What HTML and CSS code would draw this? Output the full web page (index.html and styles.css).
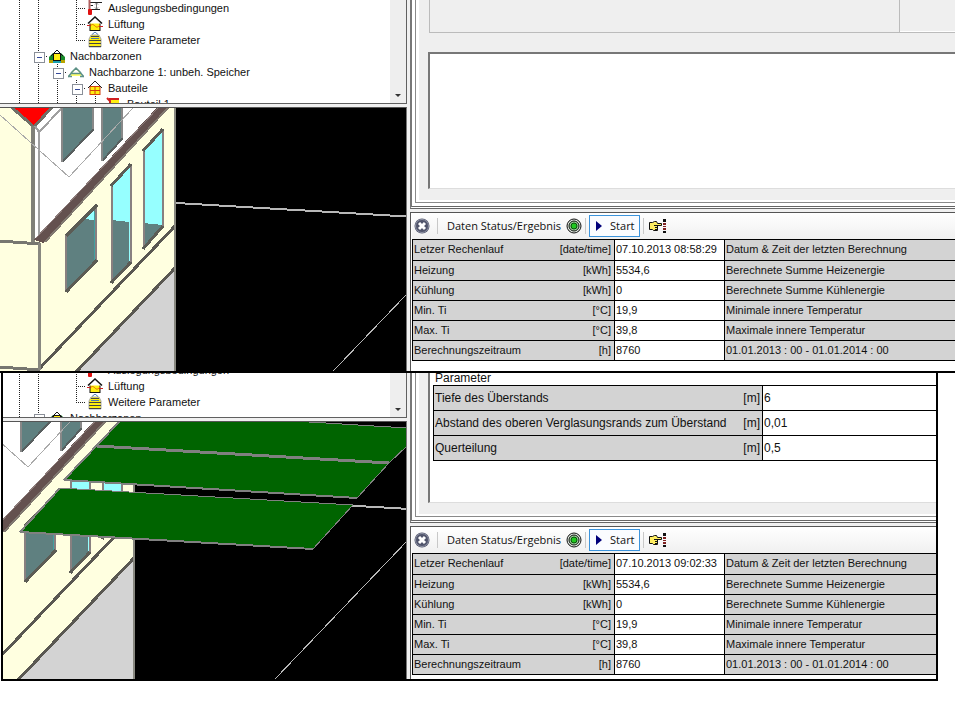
FILE: index.html
```
<!DOCTYPE html>
<html lang="de">
<head>
<meta charset="utf-8">
<title>Gebäudesimulation</title>
<link rel="stylesheet" href="styles.css">
</head>
<body>
<svg class="defs" aria-hidden="true">
  <defs>
    <symbol id="i-thermo" viewBox="0 0 16 16">
      <path d="M3 2.500H15M3 9.500H13M3.500 5.500H6" stroke="#222" fill="none"/>
      <path d="M9.500 3V9M8 4.500L9.500 3L11 4.500M8 7.500L9.500 9L11 7.500" stroke="#777" fill="none"/>
      <path d="M2.500 0V11" stroke="#b06060" stroke-width="2"/>
      <rect x="1" y="9" width="4" height="6" rx="1" fill="#e01010"/>
    </symbol>
    <symbol id="i-vent" viewBox="0 0 16 16">
      <rect x="3" y="6.500" width="10" height="8" fill="#ffee10" stroke="#111"/>
      <path d="M1 7.500L8 1L15 7.500" fill="#fff" stroke="#111" stroke-width="1.500"/>
      <path d="M3 10C5 8 6 8 8 10S11 11 13 9" fill="none" stroke="#e07000"/>
      <path d="M0 9.500H4M12 10.500H16" stroke="#d02020"/>
    </symbol>
    <symbol id="i-para" viewBox="0 0 16 16">
      <path d="M2 15V7L4 3H12L14 7V15Z" fill="#ffee10" stroke="#aaa"/>
      <path d="M4 4.500H12M2 8.500H14M2 11.500H14M2 14.500H14" stroke="#444"/>
      <path d="M5 2.500L8 0L11 2.500M4 6.500H12" fill="none" stroke="#4d7bb0"/>
    </symbol>
    <symbol id="i-zones" viewBox="0 0 16 16">
      <path d="M0 14V9L4 5H12L16 9V14Z" fill="#178a2a"/>
      <path d="M0 12H4V15H0ZM12 12H16V15H12Z" fill="#b8a400"/>
      <rect x="4.500" y="5.500" width="7" height="7" fill="#ffee10" stroke="#111"/>
      <path d="M4 13H12V15H4Z" fill="#1aa0b0"/>
      <path d="M5 5L8 2L11 5Z" fill="#fff"/>
      <path d="M2 8L8 2L14 8" fill="none" stroke="#111"/>
    </symbol>
    <symbol id="i-zone" viewBox="0 0 16 16">
      <path d="M3 12V9L8 4L13 9V12Z" fill="#ffff70"/>
      <path d="M4 9.500H12L8 5Z" fill="#fff"/>
      <path d="M0 13L3 9.500H13L16 13M3 9L8 4L13 9M0 12.500H4M12 12.500H16" fill="none" stroke="#5d9186" stroke-width="1.500"/>
    </symbol>
    <symbol id="i-parts" viewBox="0 0 16 16">
      <rect x="3" y="6.500" width="10" height="8" fill="#ffee10" stroke="#d04010"/>
      <path d="M8 7V14M3 10.500H13" stroke="#d04010"/>
      <path d="M1 8L8 1L15 8" fill="none" stroke="#222"/>
    </symbol>
    <symbol id="i-part" viewBox="0 0 16 16">
      <rect x="4" y="3" width="9" height="12" fill="#ffee10"/>
      <path d="M1 2L4 5V15M3 3H13" fill="none" stroke="#d02020" stroke-width="2"/>
    </symbol>
    <symbol id="i-close" viewBox="0 0 16 16">
      <circle cx="8" cy="8" r="7.500" fill="#50546b"/>
      <circle cx="8" cy="8" r="6.500" fill="none" stroke="#9094a6"/>
      <path d="M5 5L11 11M11 5L5 11" stroke="#fff" stroke-width="3"/>
    </symbol>
    <symbol id="i-target" viewBox="0 0 16 16">
      <circle cx="8" cy="8" r="7" fill="#dfe8df" stroke="#111"/>
      <circle cx="8" cy="8" r="5" fill="#9ccf9c" stroke="#111"/>
      <circle cx="8" cy="8" r="3" fill="#20c820" stroke="#085008"/>
    </symbol>
    <symbol id="i-hand" viewBox="0 0 18 16">
      <path d="M0.500 4.500H3.500L5.500 3.500H7.500L8.500 5.500H12.500V7.500H8.500V12.500H4.500L3.500 11.500H0.500Z" fill="#ffee60" stroke="#111"/>
      <path d="M5 7.500H9M6 9.500H9M6 11.500H8" stroke="#111"/>
      <path d="M14 1H17V4H14ZM14 13H17V15H14Z" fill="#111"/>
      <path d="M14 5H17V7H14ZM14 8H17V9H14ZM14 10H17V12H14Z" fill="#802020"/>
    </symbol>

    <g id="house">
      <path d="M0 100H175V400H0Z" fill="#ffffe0"/>
      <path d="M34 126L50 108H158L36 238Z" fill="#fff"/>
      <path d="M12 106H52L34 125Z" fill="#f00"/>
      <path d="M8 104L34 127M34 127L53 106" stroke="#707068" stroke-width="3"/>
      <path d="M35 126H39V240H35Z" fill="#fff"/>
      <path d="M33 126V242" stroke="#808078" stroke-width="4"/>
      <path d="M39 131V240M35 126L39 132L62 108" fill="none" stroke="#a0a0a0" stroke-width="2"/>
      <path d="M164 100H175L44 243L34 240Z" fill="#64514f"/>
      <path d="M175 100L45 242" stroke="#807870" stroke-width="2"/>
      <path d="M158 108L36 238" stroke="#8b7a78"/>

      <path d="M62 100H93V130L62 162Z" fill="#5f8080"/>
      <path d="M93 108V130L62 162" fill="none" stroke="#585f5f" stroke-width="2"/>
      <path d="M62 108V162M93 108V129" stroke="#888" stroke-width="2"/>
      <path d="M102 100H122V139L102 161Z" fill="#5f8080"/>
      <path d="M122 108V139L102 161" fill="none" stroke="#585f5f" stroke-width="2"/>
      <path d="M102 108V161M122 108V138" stroke="#888" stroke-width="2"/>
      <path d="M0 115L69 177L133 108" fill="none" stroke="#aaa"/>

      <path d="M143 150L163 129V226L143 248Z" fill="#96ffff"/>
      <path d="M143 223L163 225V226L143 248Z" fill="#5f8080"/>
      <path d="M111 185L131 164V262L111 283Z" fill="#96ffff"/>
      <path d="M111 220L129 222V263L111 283Z" fill="#5f8080"/>
      <path d="M66 234L97 205V259L66 291Z" fill="#5f8080"/>
      <path d="M83 219L94 208V220Z" fill="#96ffff"/>
      <path d="M94 212V260M130 222V262" stroke="#40a0a0"/>
      <g fill="none" stroke="#888080" stroke-width="2">
        <path d="M144 249V150M163 129V226M112 283V185M131 164V262M66 292V235M96 205V260"/>
      </g>
      <g stroke="#5c5c55" stroke-width="3">
        <path d="M143 151L163 129M143 249L163 226M111 186L131 164M111 283L131 262M66 236L97 205M66 292L97 260"/>
      </g>

      <path d="M175 267L58 391H175Z" fill="#d3d3d3"/>
      <path d="M175 226L40 368M175 268L58 391" stroke="#5a5852" stroke-width="3"/>
      <path d="M0 241L40 244M0 367L40 370" stroke="#777770" stroke-width="3"/>
      <path d="M39 243V370" stroke="#888880" stroke-width="3"/>
      <path d="M175 108V400" stroke="#888880" stroke-width="2"/>
      <path d="M176 203L450 219" stroke="#b8b8b8" stroke-width="2"/>
      <path d="M450 249L316 389" stroke="#b8b8b8" fill="none"/>
    </g>
  </defs>
</svg>

<section class="window window-top">
  <div class="side">
    <div class="tree-pane">
      <ul class="tree">
        <li><i class="v"></i><i class="v"></i><i></i><i class="v h"></i><svg><use href="#i-thermo"/></svg><span>Auslegungsbedingungen</span></li>
        <li><i class="v"></i><i class="v"></i><i></i><i class="v h"></i><svg><use href="#i-vent"/></svg><span>Lüftung</span></li>
        <li><i class="v"></i><i class="v"></i><i></i><i class="end h"></i><svg><use href="#i-para"/></svg><span>Weitere Parameter</span></li>
        <li><i class="v"></i><i class="v h box"></i><svg><use href="#i-zones"/></svg><span>Nachbarzonen</span></li>
        <li><i class="v"></i><i class="v"></i><i class="v h box"></i><svg><use href="#i-zone"/></svg><span>Nachbarzone 1: unbeh. Speicher</span></li>
        <li><i class="v"></i><i class="v"></i><i class="v"></i><i class="v h box"></i><svg><use href="#i-parts"/></svg><span>Bauteile</span></li>
        <li><i class="v"></i><i class="v"></i><i class="v"></i><i class="v"></i><i class="v h"></i><svg><use href="#i-part"/></svg><span>Bauteil 1</span></li>
      </ul>
      <div class="scroll"><b></b></div>
    </div>
    <svg class="scene" viewBox="0 108 406 263" preserveAspectRatio="xMinYMin slice" shape-rendering="crispEdges">
      <use href="#house"/>
    </svg>
  </div>
  <div class="main">
    <div class="pane"><div class="pane-mid"><div class="pane-inner">
      <div class="group"><div class="group-left"></div><div class="group-right"></div></div>
      <div class="sheet"></div>
    </div></div></div>
    <div class="status">
      <div class="toolbar">
        <button class="close" aria-label="Schließen"><svg><use href="#i-close"/></svg></button>
        <span class="sep"></span>
        <span class="title">Daten Status/Ergebnis</span>
        <svg><use href="#i-target"/></svg>
        <span class="sep"></span>
        <button class="start"><span class="play"></span>Start</button>
        <span class="sep"></span>
        <svg class="hand"><use href="#i-hand"/></svg>
      </div>
      <table class="results">
        <tr><th>Letzer Rechenlauf</th><td class="unit">[date/time]</td><td class="val">07.10.2013 08:58:29</td><td>Datum &amp; Zeit der letzten Berechnung</td></tr>
        <tr><th>Heizung</th><td class="unit">[kWh]</td><td class="val">5534,6</td><td>Berechnete Summe Heizenergie</td></tr>
        <tr><th>Kühlung</th><td class="unit">[kWh]</td><td class="val">0</td><td>Berechnete Summe Kühlenergie</td></tr>
        <tr><th>Min. Ti</th><td class="unit">[°C]</td><td class="val">19,9</td><td>Minimale innere Temperatur</td></tr>
        <tr><th>Max. Ti</th><td class="unit">[°C]</td><td class="val">39,8</td><td>Maximale innere Temperatur</td></tr>
        <tr><th>Berechnungszeitraum</th><td class="unit">[h]</td><td class="val">8760</td><td>01.01.2013 : 00 - 01.01.2014 : 00</td></tr>
      </table>
    </div>
  </div>
</section>

<section class="window window-bottom">
  <div class="side">
    <div class="tree-pane">
      <ul class="tree scrolled">
        <li><i class="v"></i><i class="v"></i><i></i><i class="v h"></i><svg><use href="#i-thermo"/></svg><span>Auslegungsbedingungen</span></li>
        <li><i class="v"></i><i class="v"></i><i></i><i class="v h"></i><svg><use href="#i-vent"/></svg><span>Lüftung</span></li>
        <li><i class="v"></i><i class="v"></i><i></i><i class="end h"></i><svg><use href="#i-para"/></svg><span>Weitere Parameter</span></li>
        <li><i class="v"></i><i class="v h box"></i><svg><use href="#i-zones"/></svg><span>Nachbarzonen</span></li>
      </ul>
      <div class="scroll"><b></b></div>
    </div>
    <svg class="scene" viewBox="3 422 403 257" preserveAspectRatio="xMinYMin slice" shape-rendering="crispEdges">
      <use href="#house" transform="translate(-41 290)"/>
      <g fill="#006400" stroke="#808080">
        <path d="M120 421H293L407 428V446L389 463L97 446Z"/>
        <path d="M97 446L389 463L357 498L64 480Z"/>
        <path d="M60 488L353 505L313 549L20 532Z"/>
      </g>
      <path d="M97 446L389 463" stroke="#808080" stroke-width="3"/>
      <path d="M64 480L357 498M20 532L313 549M20 532L60 488M64 480L120 421" stroke="#808080" stroke-width="2"/>
    </svg>
  </div>
  <div class="main">
    <div class="pane"><div class="pane-mid"><div class="pane-inner">
      <div class="sheet">
        <table class="params">
          <caption>Parameter</caption>
          <tr><th>Tiefe des Überstands</th><td class="unit">[m]</td><td class="val">6</td></tr>
          <tr><th>Abstand des oberen Verglasungsrands zum Überstand</th><td class="unit">[m]</td><td class="val">0,01</td></tr>
          <tr><th>Querteilung</th><td class="unit">[m]</td><td class="val">0,5</td></tr>
        </table>
      </div>
    </div></div></div>
    <div class="status">
      <div class="toolbar">
        <button class="close" aria-label="Schließen"><svg><use href="#i-close"/></svg></button>
        <span class="sep"></span>
        <span class="title">Daten Status/Ergebnis</span>
        <svg><use href="#i-target"/></svg>
        <span class="sep"></span>
        <button class="start"><span class="play"></span>Start</button>
        <span class="sep"></span>
        <svg class="hand"><use href="#i-hand"/></svg>
      </div>
      <table class="results">
        <tr><th>Letzer Rechenlauf</th><td class="unit">[date/time]</td><td class="val">07.10.2013 09:02:33</td><td>Datum &amp; Zeit der letzten Berechnung</td></tr>
        <tr><th>Heizung</th><td class="unit">[kWh]</td><td class="val">5534,6</td><td>Berechnete Summe Heizenergie</td></tr>
        <tr><th>Kühlung</th><td class="unit">[kWh]</td><td class="val">0</td><td>Berechnete Summe Kühlenergie</td></tr>
        <tr><th>Min. Ti</th><td class="unit">[°C]</td><td class="val">19,9</td><td>Minimale innere Temperatur</td></tr>
        <tr><th>Max. Ti</th><td class="unit">[°C]</td><td class="val">39,8</td><td>Maximale innere Temperatur</td></tr>
        <tr><th>Berechnungszeitraum</th><td class="unit">[h]</td><td class="val">8760</td><td>01.01.2013 : 00 - 01.01.2014 : 00</td></tr>
      </table>
    </div>
  </div>
</section>
</body>
</html>
```
FILE: styles.css
```
* { box-sizing: border-box; }

body {
  margin: 0;
  background: #fff;
  color: #111;
  font: 11px/16px "Liberation Sans", Arial, sans-serif;
}

.defs { display: block; width: 0; height: 0; }

/* windows */
.window {
  display: grid;
  grid-template-columns: 407px minmax(0, 1fr);
  column-gap: 3px;
  background: #f0f0f0;
}
.window-top { border-bottom: 2px solid #000; }
.window-bottom {
  grid-template-columns: 404px minmax(0, 1fr);
  margin: 0 17px 0 1px;
  border: solid #000;
  border-width: 0 2px 2px;
}

.side { display: flex; flex-direction: column; gap: 3px; }
.main { display: flex; flex-direction: column; gap: 3px; min-width: 0; }

/* tree */
.tree-pane {
  display: flex;
  height: 104px;
  overflow: hidden;
  border: solid #606060;
  border-width: 0 1px 1px 0;
  background: #fff;
}
.window-bottom .tree-pane { height: 45px; }

.tree {
  flex: 1;
  margin: 0;
  padding: 0 0 0 10px;
  list-style: none;
}
.window-bottom .tree { padding-left: 7px; }
.scrolled { margin-top: -11px; }
.tree li { display: flex; height: 16px; }
.tree svg { width: 16px; height: 16px; margin: 0 5px 0 1px; }

/* connector cells, one per level */
.tree i { position: relative; width: 19px; height: 16px; }
.tree .v { background: repeating-linear-gradient(#222 0 1px, transparent 1px 2px) 9px 0 / 1px 100% no-repeat; }
.tree .end { background: repeating-linear-gradient(#222 0 1px, transparent 1px 2px) 9px 0 / 1px 8px no-repeat; }
.tree .h::before {
  content: "";
  position: absolute;
  left: 9px;
  right: 0;
  top: 8px;
  height: 1px;
  background: repeating-linear-gradient(90deg, #222 0 1px, transparent 1px 2px);
}
.tree .box::after {
  content: "";
  position: absolute;
  left: 5px;
  top: 4px;
  width: 9px;
  height: 9px;
  border: 1px solid #8a8f98;
  background: linear-gradient(#34489a, #34489a) center / 5px 1px no-repeat #fff;
}

.scroll {
  display: flex;
  align-items: flex-end;
  justify-content: center;
  width: 16px;
  padding-bottom: 6px;
  background: #eee;
}
.scroll b {
  border: solid transparent;
  border-width: 3px 3px 0;
  border-top-color: #333;
}

.scene {
  display: block;
  width: 100%;
  height: 264px;
  border-top: 1px solid #555;
  border-right: 1px solid #777;
  background: #000;
}
.window-bottom .scene { height: 258px; }

/* upper right pane, nested frames */
.pane {
  display: flex;
  flex: 1;
  padding: 0 0 3px 3px;
  border-left: 2px solid #777;
  border-bottom: 3px double #666;
  background: #fff;
}
.pane-mid {
  display: flex;
  flex: 1;
  padding: 0 0 2px 3px;
  border: solid #8a8a8a;
  border-width: 0 0 1px 1px;
}
.pane-inner {
  display: flex;
  flex-direction: column;
  flex: 1;
  min-width: 0;
  padding: 0 0 11px 9px;
  background: #efefef;
}
.group {
  display: grid;
  grid-template-columns: 470px 1fr;
  height: 33px;
  margin: 0 0 19px 1px;
  border: solid #bbb;
  border-width: 0 0 1px 1px;
}
.group-left { border-right: 1px solid #bbb; }
.group-right { border-bottom: 1px solid #fff; }
.sheet {
  flex: 1;
  border: solid #777;
  border-width: 2px 0 0 2px;
  border-bottom: 1px solid #ddd;
  background: #fff;
}
.window-bottom .sheet { border-top: 0; padding-left: 3px; }

/* status pane */
.status {
  padding: 0 0 10px 1px;
  border: solid #555;
  border-width: 1px 0 0 1px;
  background: #fff;
}
.window-bottom .status { padding-bottom: 4px; }

.toolbar {
  display: flex;
  align-items: center;
  height: 26px;
  padding-left: 2px;
  background: linear-gradient(#fff, #f0f0f0);
  font: 11px/16px "Open Sans", "Noto Sans", sans-serif;
}
.toolbar svg { flex: none; width: 16px; height: 16px; }
.toolbar .hand { width: 18px; margin-left: 2px; }
.sep { width: 1px; height: 16px; margin: 0 3px; background: #c8c8c8; }
.title { margin: 0 5px 0 6px; white-space: nowrap; }
button {
  margin: 0;
  padding: 0;
  border: 0;
  background: none;
  color: inherit;
  font: inherit;
}
.close { display: flex; margin-right: 4px; }
.start {
  display: flex;
  align-items: center;
  width: 51px;
  height: 22px;
  padding-left: 6px;
  border: 1px solid #3c94dc;
  background: #fafcff;
}
.play {
  margin-right: 8px;
  border: solid transparent;
  border-width: 5px 0 5px 6px;
  border-left-color: #00007a;
}

/* data tables */
table {
  width: 100%;
  border-spacing: 0;
  table-layout: fixed;
  border-top: 1px solid #000;
}
th, td {
  padding: 0 3px 0 1px;
  border: solid #000;
  border-width: 0 0 1px 1px;
  background: #d3d3d3;
  font-weight: normal;
  text-align: left;
  white-space: nowrap;
}
.unit { border-left: 0; text-align: right; }
.val { background: #fff; }

.results tr { height: 20px; }
.results tr:first-child { height: 21px; }
.results th, .results td { padding-bottom: 2px; }
.results th { width: 132px; }
.results .unit { width: 70px; }
.results .val { width: 110px; }

.params { font-size: 12px; border-top: 0; }
.params caption { height: 12px; padding-left: 2px; line-height: 10px; text-align: left; }
.params tr { height: 25px; }
.params tr:first-child { height: 26px; }
.params tr:first-child > * { border-top-width: 1px; }
.params th { width: 300px; }
.params .unit { width: 29px; padding-right: 2px; }
```
